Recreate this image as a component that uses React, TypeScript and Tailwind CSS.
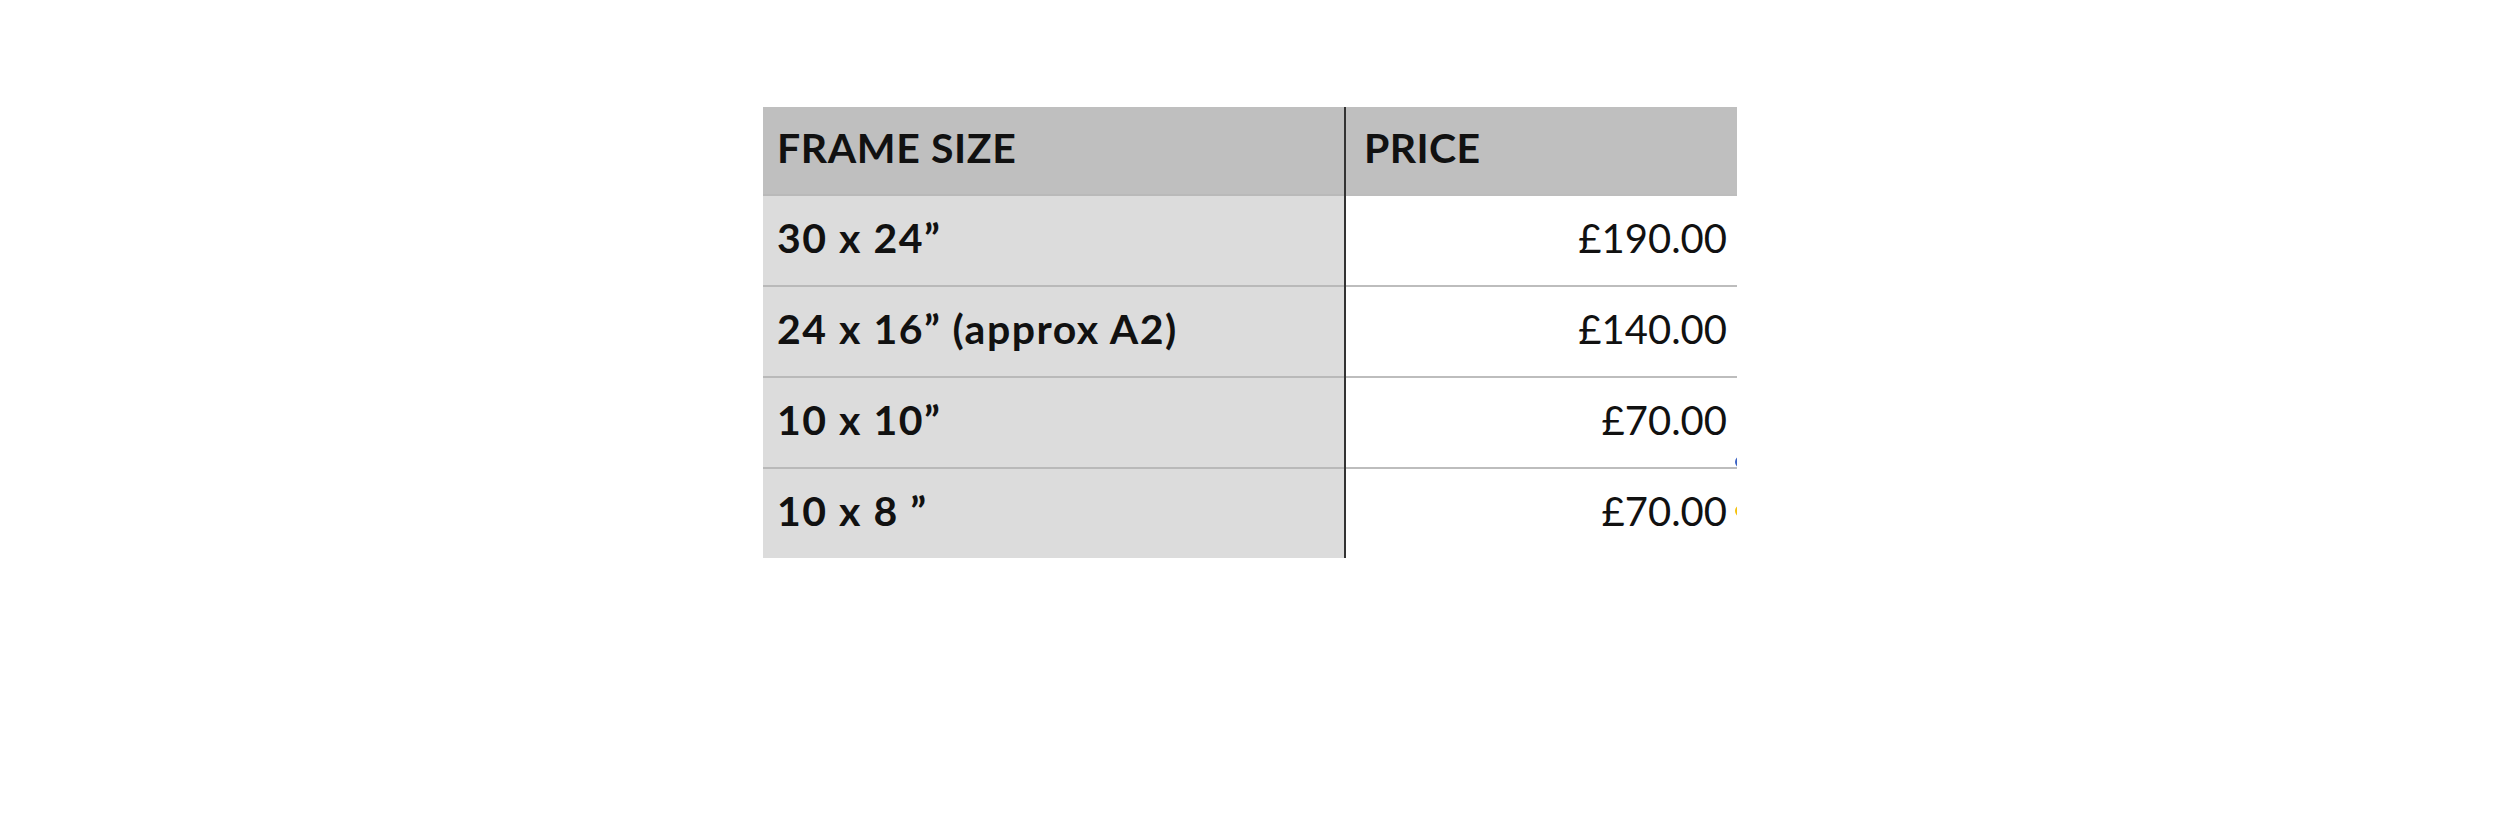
import { FC } from 'react';

interface PriceRow {
  size: string;
  price: string;
}

const rows: PriceRow[] = [
  { size: '30 x 24\u201D', price: '£190.00' },
  { size: '24 x 16\u201D (approx A2)', price: '£140.00' },
  { size: '10 x 10\u201D', price: '£70.00' },
  { size: '10 x 8 \u201D', price: '£70.00' },
];

const App: FC = () => {
  return (
    <div className="min-h-[833px] w-[2500px] bg-white pt-[107px] pl-[763px] font-['Lato','Open_Sans',sans-serif] text-[#111]">
      <div className="relative w-[974px] overflow-hidden">
        <div className="flex h-[87px] bg-[#bfbfbf]">
          <div className="flex w-[581px] items-center pb-[5px] pl-[14px] text-[41px] font-bold tracking-[0.6px]">FRAME SIZE</div>
          <div className="w-[2px] bg-[#333]"></div>
          <div className="flex flex-1 items-center pb-[5px] pl-[18px] text-[41px] font-bold tracking-[0.4px]">PRICE</div>
        </div>
        {rows.map((row) => (
          <div key={row.size + row.price} className="flex h-[91px]">
            <div className="flex w-[581px] items-center border-t-2 border-[#b9b9b9] bg-[#dcdcdc] pb-[5px] pl-[14px] text-[41px] font-bold tracking-[1.5px] whitespace-pre">
              {row.size}
            </div>
            <div className="w-[2px] bg-[#333]"></div>
            <div className="flex flex-1 items-center justify-end border-t-2 border-[#bdbdbd] bg-white pr-[10px] pb-[5px] text-[40px] font-normal">
              {row.price}
            </div>
          </div>
        ))}
        <span className="absolute top-[349px] right-[-10px] h-[12px] w-[12px] rounded-full border-2 border-[#3b62c4]"></span>
        <span className="absolute top-[398px] right-[-10px] h-[12px] w-[12px] rounded-full border-2 border-[#f4c20d]"></span>
      </div>
    </div>
  );
};

export default App;
